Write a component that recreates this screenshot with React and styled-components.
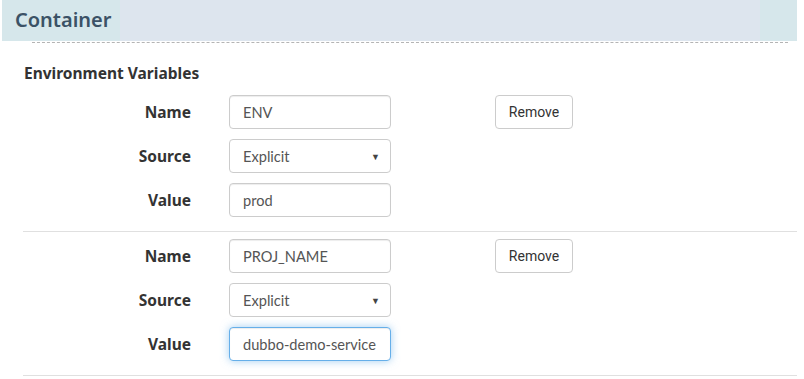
import React from "react"
import styled, { createGlobalStyle } from "styled-components"

const groups = [
  { id: "env", values: { name: "ENV", source: "Explicit", value: "prod" } },
  { id: "proj", values: { name: "PROJ_NAME", source: "Explicit", value: "dubbo-demo-service" }, focus: true },
]

const App = () => {
  return (
    <>
      <GlobalStyle />
      <Page>
        <Header>
          <Title>Container</Title>
        </Header>
        <Dashed />
        <Section>
          <SectionTitle>Environment Variables</SectionTitle>
          {groups.map(({ id, values, focus }) => (
            <Group key={id}>
              <Row>
                <Label>Name</Label>
                <Input defaultValue={values.name} />
                <Button>Remove</Button>
              </Row>
              <Row>
                <Label>Source</Label>
                <Select>
                  <span>{values.source}</span>
                  <Caret>▼</Caret>
                </Select>
              </Row>
              <Row>
                <Label>Value</Label>
                <Input defaultValue={values.value} $focus={focus} />
              </Row>
            </Group>
          ))}
        </Section>
      </Page>
    </>
  )
}

export default App

/* ── Styled Components ── */

const GlobalStyle = createGlobalStyle`
  body {
    margin: 0;
    background: #fff;
    font-family: "Noto Sans", sans-serif;
  }
`

const Page = styled.div`
  width: 804px;
  padding: 0 7px 0 2px;
  box-sizing: border-box;
`

const Header = styled.div`
  height: 41px;
  display: flex;
  align-items: center;
  padding: 0 0 2px 13px;
  box-sizing: border-box;
  background: linear-gradient(
    to right,
    #d6e7eb 0,
    #d6e7eb 118px,
    #dde5ee 118px,
    #dde5ee calc(100% - 37px),
    #d6e7eb calc(100% - 37px)
  );
`

const Title = styled.h2`
  margin: 0;
  font-size: 20px;
  font-weight: 600;
  color: #3b5266;
`

const Dashed = styled.div`
  margin: 1px 9px 0 30px;
  border-top: 1px dashed #b4b4b4;
`

const Section = styled.div`
  padding: 20px 0 0 21px;
`

const SectionTitle = styled.h4`
  margin: 0 0 12px 1px;
  font-size: 15.5px;
  line-height: 20px;
  font-weight: 700;
  color: #333;
`

const Group = styled.div`
  display: flex;
  flex-direction: column;
  gap: 10px;
  padding: 0 0 14px;
  border-bottom: 1px solid #e0e0e0;

  & + & {
    padding-top: 7px;
  }
`

const Row = styled.div`
  display: flex;
  align-items: center;
  height: 34px;
`

const Label = styled.label`
  width: 168px;
  text-align: right;
  padding-right: 38px;
  box-sizing: content-box;
  font-size: 15.5px;
  font-weight: 700;
  color: #333;
`

const Input = styled.input`
  width: 162px;
  height: 34px;
  box-sizing: border-box;
  padding: 0 13px;
  border: 1px solid ${p => (p.$focus ? "#66afe9" : "#ccc")};
  border-radius: 4px;
  font-family: Lato, sans-serif;
  font-size: 14.6px;
  color: #555;
  outline: none;
  box-shadow: ${p =>
    p.$focus
      ? "inset 0 1px 1px rgba(0,0,0,.075), 0 0 8px rgba(102,175,233,.6)"
      : "inset 0 1px 1px rgba(0,0,0,.075)"};
`

const Select = styled.div`
  width: 162px;
  height: 34px;
  box-sizing: border-box;
  padding: 0 10px 0 13px;
  border: 1px solid #ccc;
  border-radius: 4px;
  display: flex;
  align-items: center;
  justify-content: space-between;
  font-family: Lato, sans-serif;
  font-size: 14.6px;
  color: #555;
`

const Caret = styled.span`
  font-size: 9px;
  color: #444;
`

const Button = styled.button`
  margin-left: 104px;
  width: 78px;
  height: 34px;
  background: #fff;
  border: 1px solid #ccc;
  border-radius: 4px;
  font-family: Roboto, sans-serif;
  font-size: 14px;
  color: #333;
`
